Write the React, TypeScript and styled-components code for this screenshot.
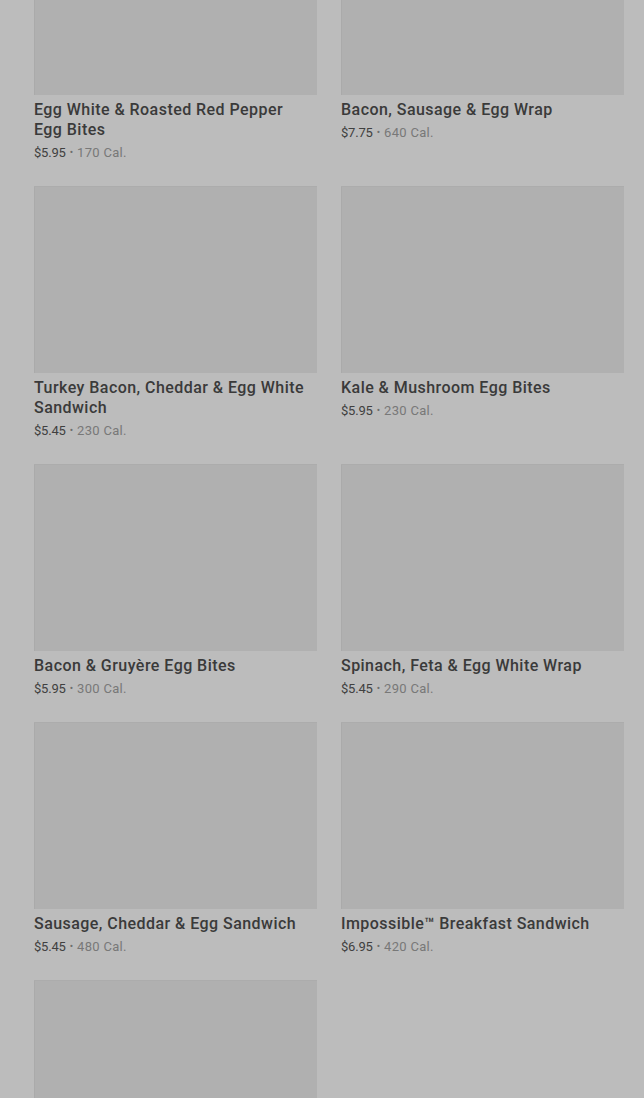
import styled, { createGlobalStyle } from "styled-components";

const GlobalStyle = createGlobalStyle`
  html, body {
    margin: 0;
    padding: 0;
    background: #bcbcbc;
    overflow: hidden;
  }
`;

type Item = { name: string; price: string; cal: number };

const items: Item[] = [
  { name: "Egg White & Roasted Red Pepper Egg Bites", price: "$5.95", cal: 170 },
  { name: "Bacon, Sausage & Egg Wrap", price: "$7.75", cal: 640 },
  { name: "Turkey Bacon, Cheddar & Egg White Sandwich", price: "$5.45", cal: 230 },
  { name: "Kale & Mushroom Egg Bites", price: "$5.95", cal: 230 },
  { name: "Bacon & Gruyère Egg Bites", price: "$5.95", cal: 300 },
  { name: "Spinach, Feta & Egg White Wrap", price: "$5.45", cal: 290 },
  { name: "Sausage, Cheddar & Egg Sandwich", price: "$5.45", cal: 480 },
  { name: "Impossible™ Breakfast Sandwich", price: "$6.95", cal: 420 },
];

const App = () => {
  return (
    <Page>
      <GlobalStyle />
      <Grid>
        {items.map((item, index) => (
          <Card key={index}>
            <Thumb />
            <Name>{item.name}</Name>
            <Meta>
              <Price>{item.price}</Price>
              <Dot>•</Dot>
              <Cal>{item.cal} Cal.</Cal>
            </Meta>
          </Card>
        ))}
        {/* next card, only its picture is in view */}
        <Card>
          <Thumb />
        </Card>
      </Grid>
    </Page>
  );
};

const Page = styled.div`
  width: 644px;
  height: 1098px;
  overflow: hidden;
  background: #bcbcbc;
  font-family: Roboto, "Liberation Sans", sans-serif;
`;

const Grid = styled.div`
  display: grid;
  grid-template-columns: 283px 283px;
  column-gap: 24px;
  row-gap: 23px;
  padding: 0 20px 0 34px;
  margin-top: -92px; // list is scrolled
  align-items: start;
`;

const Card = styled.div`
  display: flex;
  flex-direction: column;
`;

const Thumb = styled.div`
  box-sizing: border-box;
  height: 187px;
  background: #b0b0b0;
  border-top: 1px solid #acacac;
  box-shadow: inset 1px 0 0 rgba(0, 0, 0, 0.03);
  margin-bottom: 5px;
`;

const Name = styled.div`
  font-size: 16px;
  line-height: 20px;
  font-weight: 500;
  color: #3a3a3a;
  letter-spacing: 0.45px;
  padding-right: 6px;
`;

const Meta = styled.div`
  margin-top: 3px;
  font-size: 13px;
  line-height: 20px;
  display: flex;
  align-items: center;
  gap: 4px;
`;

const Price = styled.span`
  color: #404040;
  letter-spacing: -0.2px;
`;

const Dot = styled.span`
  color: #6e6e6e;
  font-size: 10px;
`;

const Cal = styled.span`
  color: #787878;
  letter-spacing: 0.3px;
`;

export default App;
